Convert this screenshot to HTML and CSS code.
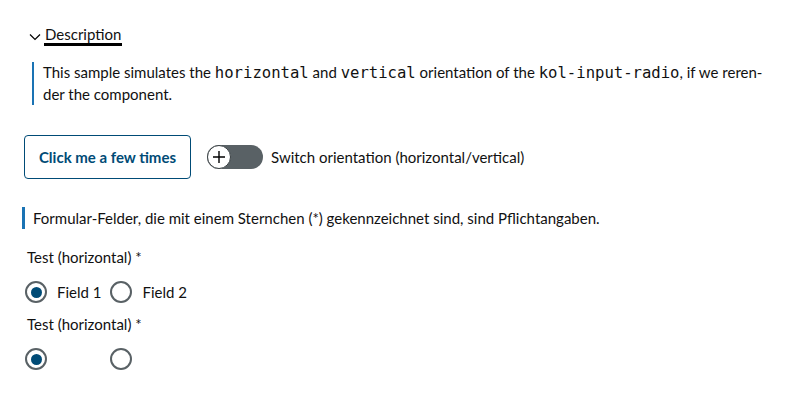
FILE: index.html
```html
<!DOCTYPE html>
<html lang="en">
<head>
<meta charset="utf-8">
<title>Radio orientation</title>
<link rel="stylesheet" href="styles.css">
</head>
<body>
<main class="page">
  <section class="details">
    <div class="summary">
      <svg class="chevron" width="12" height="8" viewBox="0 0 12 8"><path d="M1 1.5 L6 6.5 L11 1.5" fill="none" stroke="#000" stroke-width="1.2"/></svg>
      <span class="summary-text">Description</span>
    </div>
    <p class="desc">This sample simulates the <code>horizontal</code> and <code>vertical</code> orientation of the <code>kol-input-radio</code>, if we reren-<br>der the component.</p>
  </section>

  <div class="controls">
    <button class="btn" type="button">Click me a few times</button>
    <label class="switch">
      <span class="track">
        <span class="knob">
          <svg width="14" height="14" viewBox="0 0 14 14"><path d="M7 1 V13 M1 7 H13" stroke="#000" stroke-width="1.4"/></svg>
        </span>
      </span>
      <span class="switch-label">Switch orientation (horizontal/vertical)</span>
    </label>
  </div>

  <form class="form">
    <p class="hint">Formular-Felder, die mit einem Sternchen (*) gekennzeichnet sind, sind Pflichtangaben.</p>
    <div class="group first">
      <div class="legend">Test (horizontal) *</div>
      <div class="options">
        <label class="opt"><span class="radio checked"></span><span class="opt-text">Field 1</span></label>
        <label class="opt"><span class="radio"></span><span class="opt-text">Field 2</span></label>
      </div>
    </div>
    <div class="group">
      <div class="legend">Test (horizontal) *</div>
      <div class="options">
        <label class="opt"><span class="radio checked"></span><span class="opt-text hidden">Field 1</span></label>
        <label class="opt"><span class="radio"></span><span class="opt-text hidden">Field 2</span></label>
      </div>
    </div>
  </form>
</main>
</body>
</html>
```
FILE: styles.css
```css
* { box-sizing: border-box; }
html, body { margin: 0; background: #fff; }
body {
  font-family: Lato, "Noto Sans", sans-serif;
  font-size: 15px;
  color: #111;
  width: 800px;
  height: 419px;
  overflow: hidden;
}
.page { padding: 26px 0 0 0; }

.summary {
  display: flex;
  align-items: center;
  gap: 3px;
  margin-left: 29px;
  height: 20px;
}
.chevron { margin-top: 2px; }
.summary-text {
  font-size: 15px;
  line-height: 17px;
  border-bottom: 3px solid #000;
  padding: 0 1px;
}

.desc {
  margin: 16px 0 0 32px;
  padding: 0 0 0 9px;
  border-left: 2px solid #1a73b4;
  line-height: 21px;
  font-size: 15px;
  width: 740px;
}
.desc code {
  font-family: "DejaVu Sans Mono", monospace;
  font-size: 15.6px;
}

.controls {
  display: flex;
  align-items: center;
  margin: 30px 0 0 24px;
}
.btn {
  height: 44px;
  width: 167px;
  border: 1px solid #004b76;
  border-radius: 4px;
  background: #fff;
  color: #004b76;
  font-family: Lato, "Noto Sans", sans-serif;
  font-weight: 700;
  font-size: 15px;
  padding: 0;
}
.switch {
  display: flex;
  align-items: center;
  gap: 8px;
  margin-left: 16px;
}
.track {
  display: flex;
  align-items: center;
  width: 56px;
  height: 24px;
  border-radius: 12px;
  background: #596165;
}
.knob {
  width: 24px;
  height: 24px;
  border-radius: 50%;
  background: #fff;
  border: 1.5px solid #3a4144;
  display: flex;
  align-items: center;
  justify-content: center;
}
.switch-label { font-size: 15px; }

.form { margin-top: 28px; }
.hint {
  margin: 0 0 0 22px;
  padding-left: 8px;
  border-left: 3px solid #1a73b4;
  line-height: 22px;
  font-size: 15px;
}
.group { padding: 0; }
.group.first { padding-top: 18px; }
.legend {
  margin-left: 27px;
  font-size: 15px;
  line-height: 20px;
}
.options {
  display: flex;
  align-items: center;
  gap: 9px;
  margin: 14px 0 11px 25px;
}
.opt {
  display: flex;
  align-items: center;
  gap: 10px;
}
.radio {
  width: 22px;
  height: 22px;
  border-radius: 50%;
  border: 2px solid #596165;
  display: flex;
  align-items: center;
  justify-content: center;
}
.radio.checked::after {
  content: "";
  width: 11px;
  height: 11px;
  border-radius: 50%;
  background: #004b76;
}
.opt-text { font-size: 15px; }
.hidden { visibility: hidden; }
```
